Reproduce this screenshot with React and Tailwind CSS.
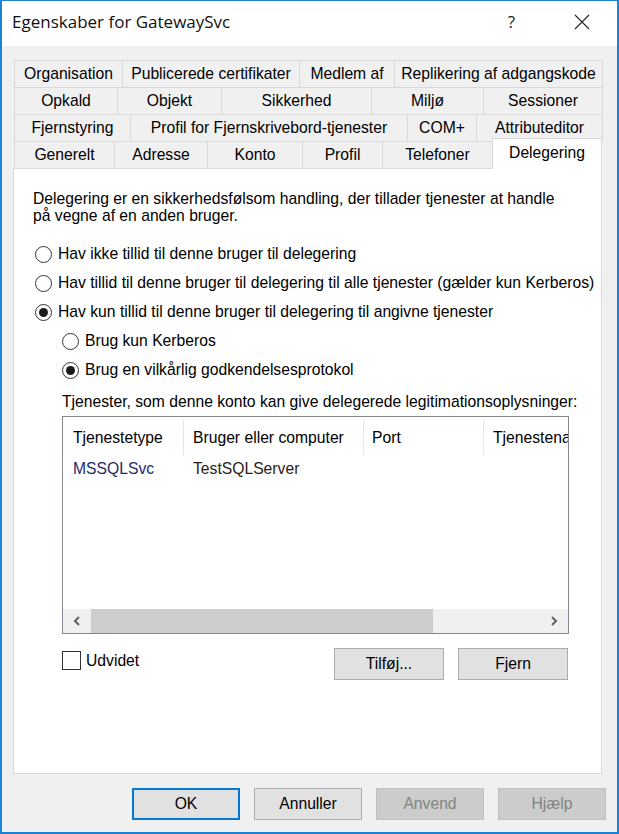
import React from 'react';

const tabRows = [
  [['Organisation', 108], ['Publicerede certifikater', 177], ['Medlem af', 95], ['Replikering af adgangskode', 208]],
  [['Opkald', 103], ['Objekt', 104], ['Sikkerhed', 150], ['Miljø', 112], ['Sessioner', 119]],
  [['Fjernstyring', 116], ['Profil for Fjernskrivebord-tjenester', 277], ['COM+', 69], ['Attributeditor', 126]],
];

const lastRow = [['Generelt', 100], ['Adresse', 93], ['Konto', 95], ['Profil', 80], ['Telefoner', 110]];

const Tab = ({ label, w }) => (
  <div
    className="h-[27px] border-t border-l border-[#d9d9d9] bg-[#f0f0f0] flex items-center justify-center whitespace-nowrap"
    style={{ width: w }}
  >
    {label}
  </div>
);

const Radio = ({ checked, label, sub }) => (
  <div className={sub ? 'flex items-center h-[22px] ml-[29px]' : 'flex items-center h-[22px] ml-[2px]'}>
    <span className="w-[17px] h-[17px] rounded-full border border-[#333333] bg-white flex items-center justify-center shrink-0">
      {checked && <span className="w-[9px] h-[9px] rounded-full bg-[#1a1a1a]" />}
    </span>
    <span className="ml-[6px] whitespace-nowrap">{label}</span>
  </div>
);

const Btn = ({ children, primary, disabled }) => {
  let cls = 'w-[108px] h-[32px] flex items-center justify-center ';
  if (primary) cls += 'bg-[#e1e1e1] border-2 border-[#0078d7]';
  else if (disabled) cls += 'bg-[#cccccc] border border-[#bfbfbf] text-[#838383]';
  else cls += 'bg-[#e1e1e1] border border-[#adadad]';
  return <div className={cls}>{children}</div>;
};

export default function App() {
  return (
    <div className="w-[619px] h-[834px] flex flex-col border-t border-x-2 border-b-2 border-[#1883d7] bg-[#f0f0f0] text-[15.7px] text-black font-['Liberation_Sans',Arial,sans-serif] overflow-hidden">
      {/* title bar */}
      <div className="h-[45px] bg-white flex items-center shrink-0 pb-[3px]">
        <span className="ml-[10px] text-[17px] font-['Open_Sans',sans-serif] text-[#111]">Egenskaber for GatewaySvc</span>
        <span className="ml-auto text-[17px] font-['Open_Sans',sans-serif] text-[#222] mr-[59px]">?</span>
        <svg width="16" height="16" viewBox="0 0 16 16" className="mr-[27px]">
          <path d="M1 1 L15 15 M15 1 L1 15" stroke="#222" strokeWidth="1.1" fill="none" />
        </svg>
      </div>

      {/* body */}
      <div className="flex-1 flex flex-col pl-[11px] pr-[15px] pt-[14px] pb-[12px]">
        <div className="ml-[1px] flex flex-col">
          {tabRows.map((row, i) => (
            <div key={i} className="flex w-fit border-r border-[#d9d9d9]">
              {row.map(([l, w]) => (
                <Tab key={l} label={l} w={w} />
              ))}
            </div>
          ))}
          <div className="flex h-[27px] items-end">
            {lastRow.map(([l, w]) => (
              <Tab key={l} label={l} w={w} />
            ))}
            <div className="relative z-10 w-[110px] h-[31px] -mb-px bg-white border-t border-l border-r border-[#d9d9d9] flex items-center justify-center pb-[2px]">
              Delegering
            </div>
          </div>
        </div>

        {/* panel */}
        <div className="h-[606px] bg-white border border-[#d9d9d9] pl-[19px] pt-[21px] flex flex-col">
          <p className="leading-[17px] whitespace-nowrap">
            Delegering er en sikkerhedsfølsom handling, der tillader tjenester at handle
            <br />
            på vegne af en anden bruger.
          </p>

          <div className="mt-[19px] flex flex-col gap-[7px]">
            <Radio label="Hav ikke tillid til denne bruger til delegering" />
            <Radio label="Hav tillid til denne bruger til delegering til alle tjenester (gælder kun Kerberos)" />
            <Radio checked label="Hav kun tillid til denne bruger til delegering til angivne tjenester" />
            <Radio sub label="Brug kun Kerberos" />
            <Radio sub checked label="Brug en vilkårlig godkendelsesprotokol" />
          </div>

          <div className="ml-[29px] mt-[12px] leading-[17px] whitespace-nowrap">
            Tjenester, som denne konto kan give delegerede legitimationsoplysninger:
          </div>

          <div className="ml-[29px] mt-[6px] w-[507px] h-[218px] border border-[#828790] bg-white flex flex-col overflow-hidden">
            <div className="h-[38px] pt-[3px] flex items-start">
              <div className="w-[121px] h-[35px] border-r border-[#e5e5e5] pl-[10px] flex items-center">Tjenestetype</div>
              <div className="w-[180px] h-[35px] border-r border-[#e5e5e5] pl-[9px] flex items-center">Bruger eller computer</div>
              <div className="w-[120px] h-[35px] border-r border-[#e5e5e5] pl-[8px] flex items-center">Port</div>
              <div className="w-[84px] h-[35px] pl-[9px] flex items-center whitespace-nowrap overflow-hidden">Tjenestena</div>
            </div>
            <div className="h-[28px] flex items-center">
              <div className="w-[121px] pl-[10px] text-[#1d2a68]">MSSQLSvc</div>
              <div className="w-[180px] pl-[9px] text-[#2a2218]">TestSQLServer</div>
            </div>
            <div className="flex-1" />
            <div className="h-[24px] bg-[#f0f0f0] flex items-stretch">
              <div className="w-[28px] flex items-center justify-center">
                <svg width="8" height="10" viewBox="0 0 8 10">
                  <path d="M6 1 L2 5 L6 9" stroke="#606060" strokeWidth="2" fill="none" />
                </svg>
              </div>
              <div className="w-[342px] bg-[#cdcdcd]" />
              <div className="flex-1" />
              <div className="w-[28px] flex items-center justify-center">
                <svg width="8" height="10" viewBox="0 0 8 10">
                  <path d="M2 1 L6 5 L2 9" stroke="#606060" strokeWidth="2" fill="none" />
                </svg>
              </div>
            </div>
          </div>

          <div className="ml-[29px] mt-[14px] w-[506px] flex items-start justify-between">
            <div className="flex items-center mt-[1px]">
              <span className="w-[19px] h-[19px] border border-[#333333] bg-white" />
              <span className="ml-[5px]">Udvidet</span>
            </div>
            <div className="flex gap-[14px]">
              <div className="w-[110px] h-[32px] bg-[#e1e1e1] border border-[#adadad] flex items-center justify-center">Tilføj...</div>
              <div className="w-[110px] h-[32px] bg-[#e1e1e1] border border-[#adadad] flex items-center justify-center">Fjern</div>
            </div>
          </div>
        </div>

        {/* dialog buttons */}
        <div className="mt-[14px] -mr-[4px] flex justify-end gap-[14px]">
          <Btn primary>OK</Btn>
          <Btn>Annuller</Btn>
          <Btn disabled>Anvend</Btn>
          <Btn disabled>Hjælp</Btn>
        </div>
      </div>
    </div>
  );
}
